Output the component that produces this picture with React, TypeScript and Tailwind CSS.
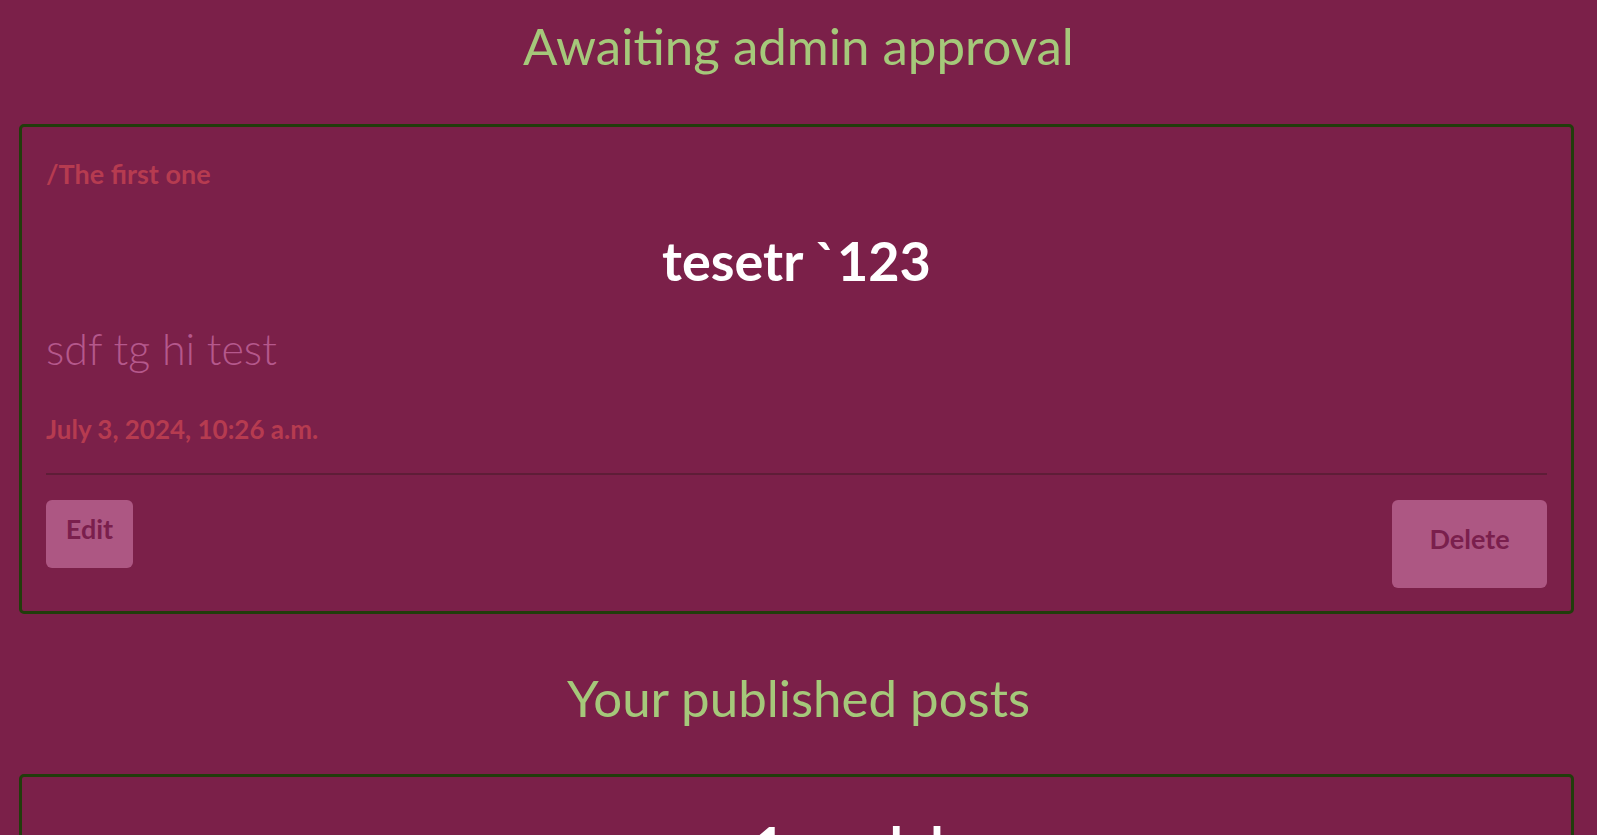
const font = "font-['Lato','Liberation_Sans',sans-serif]";

function PendingCard() {
  return (
    <div className="ml-[19px] mr-[23px] rounded-[5px] border-[3px] border-[#213d0b] px-6 pt-[33px] pb-[23px]">
      <p className="text-[27px] font-bold leading-none text-[#b63b50]">/The first one</p>
      <h2 className="mt-[47px] text-center text-[54px] font-bold leading-none text-white">tesetr `123</h2>
      <p className="mt-[39px] text-[43px] font-light leading-none text-[#b5588c]">sdf tg hi test</p>
      <p className="mt-[46px] text-[26px] font-bold leading-none text-[#b63b50]">July 3, 2024, 10:26 a.m.</p>
      <div className="mt-[31px] h-[2px] bg-[#5e1d37]" />
      <div className="mt-[25px] flex items-start justify-between">
        <button className="flex h-[68px] w-[87px] items-center justify-center rounded-[6px] bg-[#ad5783] pb-[12px] text-[27px] font-bold leading-none text-[#7a1f4d]">
          Edit
        </button>
        <button className="flex h-[88px] w-[155px] items-center justify-center rounded-[6px] bg-[#ad5783] pb-[12px] text-[27px] font-bold leading-none text-[#7a1f4d]">
          Delete
        </button>
      </div>
    </div>
  );
}

function PublishedCard() {
  return (
    <div className="ml-[19px] mr-[23px] h-[400px] rounded-[5px] border-[3px] border-[#213d0b] px-6 pt-[42px]">
      <h2 className="text-center text-[54px] font-bold leading-none text-white">gear1 medal</h2>
    </div>
  );
}

export default function App() {
  return (
    <div className={`h-screen overflow-hidden bg-[#7b2049] pt-5 ${font}`}>
      <h1 className="text-center text-[51px] leading-none text-[#a5c87a]">Awaiting admin approval</h1>
      <div className="mt-[53px]">
        <PendingCard />
      </div>
      <h1 className="mt-[58px] text-center text-[51px] leading-none text-[#a5c87a]">Your published posts</h1>
      <div className="mt-[51px]">
        <PublishedCard />
      </div>
    </div>
  );
}
